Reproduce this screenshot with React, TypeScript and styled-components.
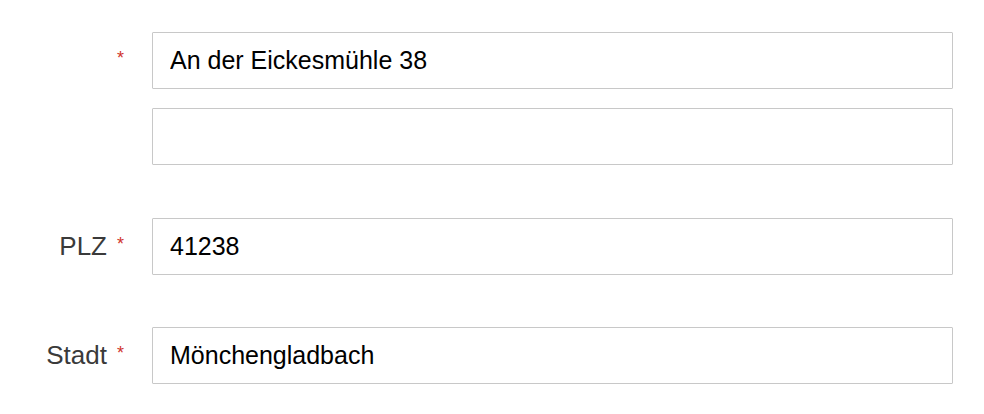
import * as React from "react";
import styled, { createGlobalStyle } from "styled-components";

const GlobalStyle = createGlobalStyle`
    html, body {
        margin: 0;
        padding: 0;
        background: #ffffff;
        font-family: "Liberation Sans", Arial, Helvetica, sans-serif;
    }
`;

const Form = styled.form`
    display: flex;
    flex-direction: column;
    padding-top: 32px;
    width: 953px;
`;

const Row = styled.div<{ gap: number }>`
    display: grid;
    grid-template-columns: 152px 801px;
    align-items: center;
    margin-bottom: ${(p) => p.gap}px;
`;

const Label = styled.label`
    display: flex;
    justify-content: flex-end;
    align-items: center;
    padding-right: 28px;
    font-size: 26px;
    color: #3a3a3a;
`;

const Required = styled.span`
    color: #d0342c;
    font-size: 18px;
    margin-left: 10px;
    position: relative;
    top: -2px;
`;

const Input = styled.input`
    box-sizing: border-box;
    width: 801px;
    height: 57px;
    border: 1px solid #c8c8c8;
    border-radius: 1px;
    padding: 0 17px;
    font-family: "Liberation Sans", Arial, Helvetica, sans-serif;
    font-size: 25px;
    color: #000;
    background: #fff;
    outline: none;
`;

interface FieldProps {
    label?: string;
    required?: boolean;
    value: string;
    gap: number;
}

const Field: React.FC<FieldProps> = ({ label, required, value, gap }) => (
    <Row gap={gap}>
        <Label>
            {label}
            {required && <Required>*</Required>}
        </Label>
        <Input defaultValue={value} />
    </Row>
);

export default function App() {
    return (
        <>
            <GlobalStyle />
            <Form>
                <Field required value="An der Eickesmühle 38" gap={19} />
                <Field value="" gap={53} />
                <Field label="PLZ" required value="41238" gap={52} />
                <Field label="Stadt" required value="Mönchengladbach" gap={0} />
            </Form>
        </>
    );
}
